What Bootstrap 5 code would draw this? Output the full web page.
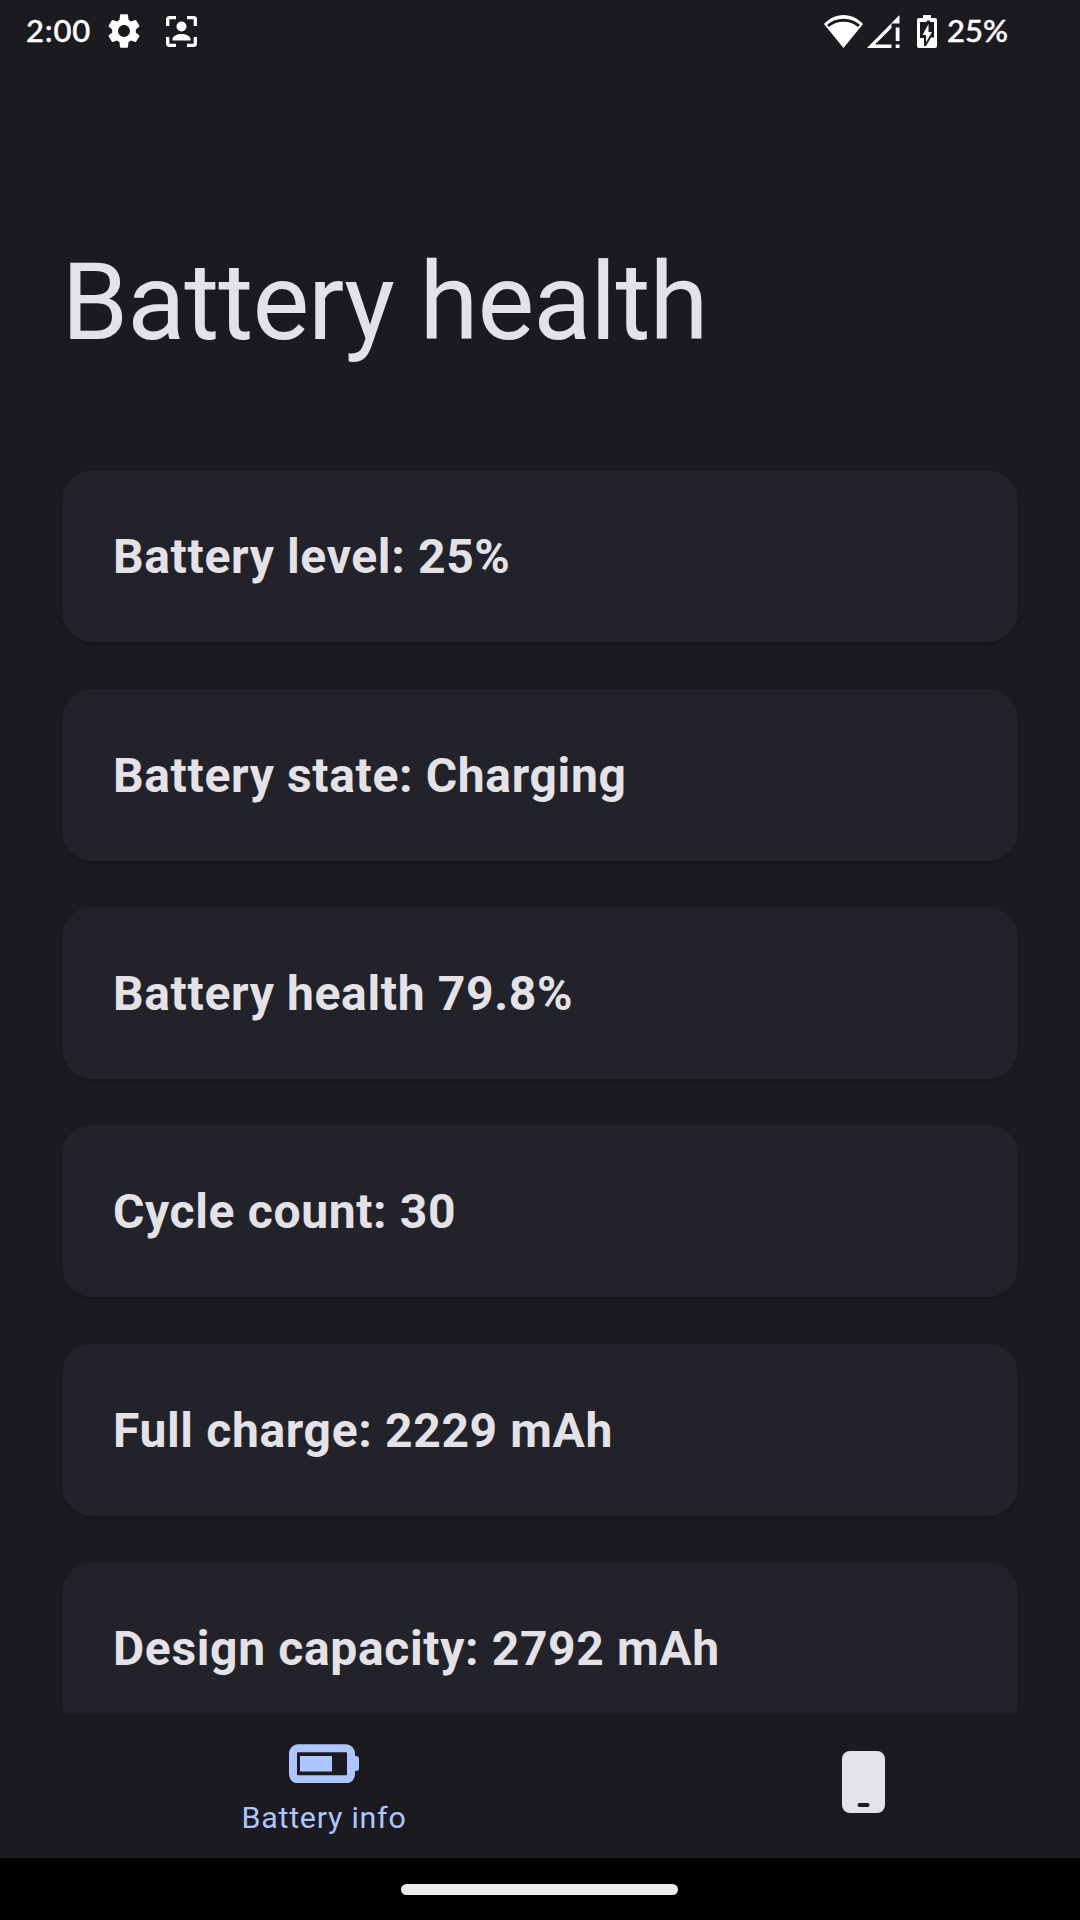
<!DOCTYPE html>
<html lang="en">
<head>
<meta charset="utf-8">
<meta name="viewport" content="width=device-width, initial-scale=1">
<title>Battery health</title>
<link rel="stylesheet" href="https://cdn.jsdelivr.net/npm/bootstrap@5.3.0/dist/css/bootstrap.min.css">
<style>
  body { background: #1b1b1f; color: #e4e2e6; font-family: Roboto, sans-serif; }
  svg { display: block; flex: none; }
  .screen { height: 1920px; }
  .status-bar { height: 62px; padding: 0 72px 0 26px; color: #fff; font: 500 31px/60px Lato, sans-serif; -webkit-text-stroke: .4px #fff; }
  .status-bar span { height: 62px; }
  .clock { width: 81px; letter-spacing: .8px; }
  .capture-icon { margin-left: 25px; }
  .signal-icon { margin-left: 4px; }
  .battery-icon { margin: 0 10px 0 17px; }
  .page-title { margin: 178px 0 0; padding: 0 61.5px; font-size: 107px; line-height: 125px; font-weight: 400; letter-spacing: -1px; white-space: nowrap; }
  .info-list { margin-top: 105.2px; padding: 0 62px; gap: 46.4px; }
  .info-card { --bs-card-bg: #22222a; --bs-card-color: #e4e2e6; flex: none; height: 172px; border: 0; border-radius: 30px; padding: 2px 51px 0; justify-content: center; font-size: 48px; line-height: 56px; font-weight: 700; letter-spacing: .65px; box-shadow: 0 2px 3px rgba(0,0,0,.2); }
  .tab-bar { height: 144px; background: #1b1b1f; }
  .tab-item { width: 40%; color: #e4e2e6; padding: 0; border-radius: 0; font-size: 30.4px; line-height: 36px; letter-spacing: .75px; }
  .tab-item:hover { color: #e4e2e6; }
  .tab-item.active { width: 60%; color: #adc6ff; }
  .battery-tab-icon { margin: 30px 0 17px; }
  .device-tab-icon { margin: 0 1px 8px 0; }
  .gesture-area { height: 62px; background: #000; }
  .gesture-pill { width: 277px; height: 11px; margin-right: 1px; background: #ececec; }
</style>
<script src="https://cdn.jsdelivr.net/npm/bootstrap@5.3.0/dist/js/bootstrap.bundle.min.js"></script>
</head>
<body>
<div class="screen d-flex flex-column overflow-hidden">
  <header class="status-bar d-flex align-items-center flex-shrink-0">
    <span class="clock">2:00</span>
    <svg width="34" height="34" viewBox="1.7 1.7 20.6 20.6" fill="#fff"><path d="M19.14 12.94c.04-.3.06-.61.06-.94 0-.32-.02-.64-.07-.94l2.03-1.58a.49.49 0 0 0 .12-.61l-1.92-3.32a.488.488 0 0 0-.59-.22l-2.39.96c-.5-.38-1.03-.7-1.62-.94L14.4 2.3a.484.484 0 0 0-.48-.41h-3.84c-.24 0-.43.17-.47.41l-.36 3.05c-.59.24-1.13.57-1.62.94l-2.39-.96a.488.488 0 0 0-.59.22L2.74 8.87c-.12.21-.08.47.12.61l2.03 1.58c-.05.3-.09.63-.09.94s.02.64.07.94l-2.03 1.58a.49.49 0 0 0-.12.61l1.92 3.32c.12.22.37.29.59.22l2.39-.96c.5.38 1.03.7 1.62.94l.36 3.05c.05.24.24.41.48.41h3.84c.24 0 .44-.17.47-.41l.36-3.05c.59-.24 1.13-.56 1.62-.94l2.39.96c.22.08.47 0 .59-.22l1.92-3.32a.49.49 0 0 0-.12-.61l-2.01-1.58zM12 15.6c-1.98 0-3.6-1.62-3.6-3.6s1.62-3.6 3.6-3.6 3.6 1.62 3.6 3.6-1.62 3.6-3.6 3.6z"/></svg>
    <svg class="capture-icon" width="31" height="31" viewBox="0 0 31 31" fill="#fff"><path d="M1.700 10V3.200Q1.700 1.700 3.200 1.700H10M21 1.700h6.800q1.500 0 1.500 1.500V10M29.300 21v6.800q0 1.500-1.500 1.500H21M10 29.300H3.200q-1.500 0-1.500-1.500V21" fill="none" stroke="#fff" stroke-width="3.3"/><circle cx="15.5" cy="10.500" r="5"/><path d="M6.500 24.500V23c0-3 5-5 9-5s9 2 9 5v1.500z"/></svg>
    <svg class="ms-auto" width="39" height="33" viewBox="0 0 39 33"><path fill="#fff" d="M19.500 33 0 9C5 3.800 11.500 0 19.500 0S34 3.800 39 9z"/><path fill="none" stroke="#1b1b1f" stroke-width="3" d="M4 11C8.500 7 13.500 5.200 19.500 5.200s11 1.800 15.500 5.800"/></svg>
    <svg class="signal-icon" width="33" height="33" viewBox="0 0 33 33" fill="#fff"><path d="M0 33 32.500 0v8.500H24.500V13L8 29.500h16.500V33z"/><path d="M28.700 12.500h3.800V26h-3.800zM28.700 29.500h3.800V33h-3.800z"/></svg>
    <svg class="battery-icon" width="20" height="33" viewBox="0 0 20 33"><path fill="#fff" d="M6 0h8v3h4q2 0 2 2v26q0 2-2 2H2q-2 0-2-2V5q0-2 2-2h4z"/><path fill="#1b1b1f" d="M3 14 10.500 5.500H13V7h4v15.500h-3L9 31H7v-8H3z"/><path fill="#1b1b1f" d="M3 7h8v8H3z"/><path fill="#fff" d="M11.500 9v8H15L9 27.500V20H5.500z"/></svg>
    <span>25%</span>
  </header>
  <main class="flex-fill overflow-hidden">
    <h1 class="page-title">Battery health</h1>
    <div class="info-list d-flex flex-column">
      <div class="card info-card">Battery level: 25%</div>
      <div class="card info-card">Battery state: Charging</div>
      <div class="card info-card">Battery health 79.8%</div>
      <div class="card info-card">Cycle count: 30</div>
      <div class="card info-card">Full charge: 2229 mAh</div>
      <div class="card info-card">Design capacity: 2792 mAh</div>
    </div>
  </main>
  <nav class="tab-bar d-flex flex-shrink-0">
    <a class="tab-item nav-link active d-flex flex-column align-items-center" href="#">
      <svg class="battery-tab-icon" width="70" height="39" viewBox="0 0 70 39"><rect x="4" y="4.300" width="58" height="31" rx="5" fill="none" stroke="#adc6ff" stroke-width="8"/><path fill="#adc6ff" d="M11 12h32v15.500H11zM65 12h2q3 0 3 3v9q0 3-3 3h-2z"/></svg>
      <span>Battery info</span>
    </a>
    <a class="tab-item nav-link d-flex align-items-center justify-content-center" href="#" aria-label="Device">
      <svg class="device-tab-icon" width="43" height="62" viewBox="0 0 43 62"><rect width="43" height="62" rx="8" fill="#e4e2e6"/><rect x="15.500" y="52" width="12" height="4" rx="2" fill="#1b1b1f"/></svg>
    </a>
  </nav>
  <footer class="gesture-area d-flex align-items-center justify-content-center flex-shrink-0"><div class="gesture-pill rounded-pill"></div></footer>
</div>
</body>
</html>
